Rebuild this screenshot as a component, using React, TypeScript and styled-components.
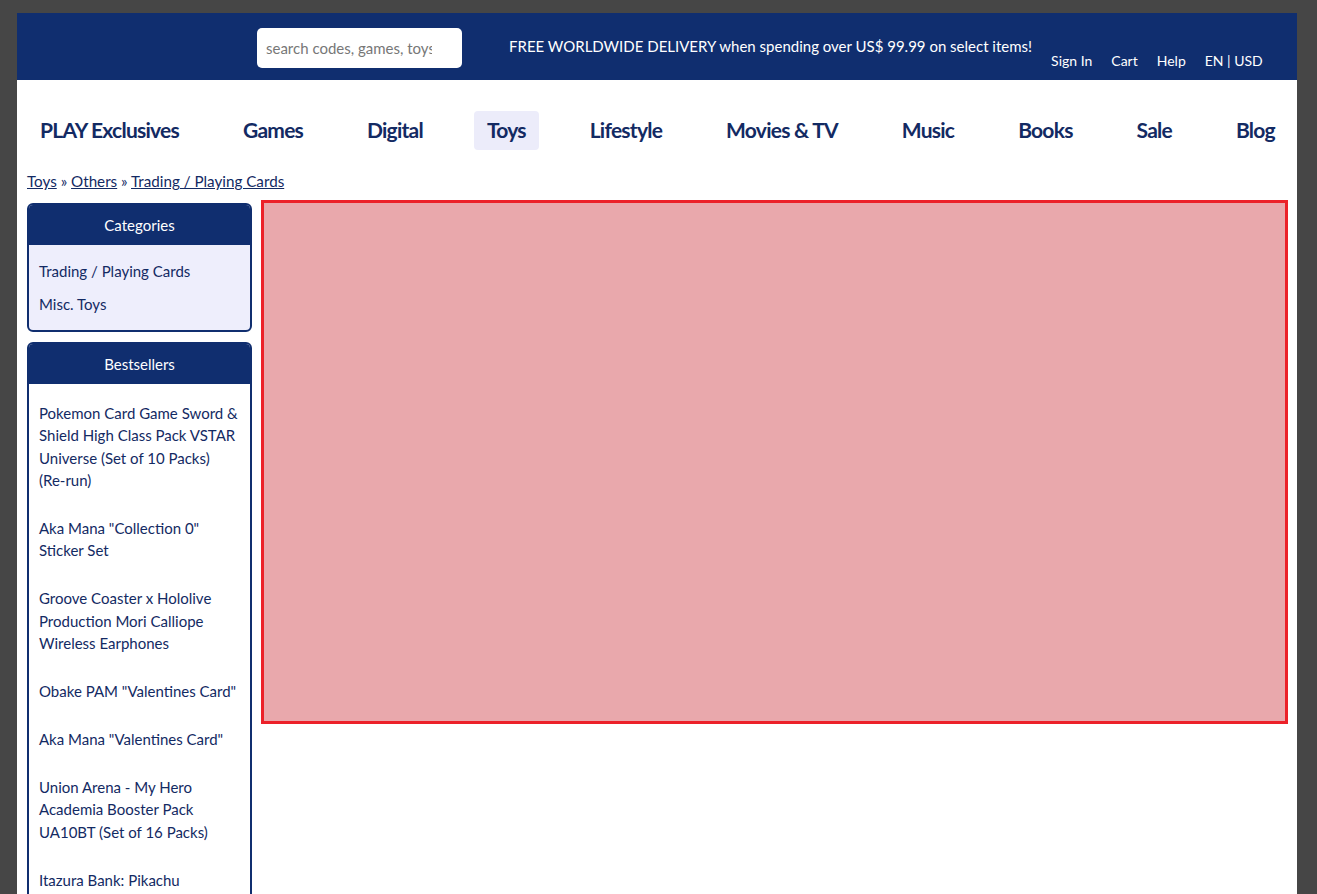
import React from "react";
import styled, { createGlobalStyle } from "styled-components";

const GlobalStyle = createGlobalStyle`
  html, body {
    margin: 0;
    padding: 0;
    background: #464646;
    font-family: Lato, "Open Sans", sans-serif;
  }
`;

const Page = styled.div`
  width: 1280px;
  margin: 13px 0 0 17px;
  background: #fff;
  min-height: 881px;
`;

const Header = styled.header`
  height: 67px;
  background: #102e6f;
  display: flex;
  align-items: flex-start;
  padding-left: 240px;
  box-sizing: border-box;
`;

const Search = styled.input`
  width: 205px;
  height: 40px;
  margin-top: 15px;
  border: none;
  border-radius: 5px;
  padding: 0 30px 0 9px;
  box-sizing: border-box;
  font-family: Lato, sans-serif;
  font-size: 15px;
  color: #333;
  outline: none;
  &::placeholder {
    color: #777;
  }
`;

const Promo = styled.div`
  margin: 24px 0 0 47px;
  color: #fff;
  font-size: 15px;
`;

const TopLinks = styled.nav`
  display: flex;
  gap: 19px;
  margin: 39px 0 0 19px;
`;

const TopLink = styled.a`
  color: #fff;
  font-size: 14px;
  text-decoration: none;
`;

const MainNav = styled.nav`
  display: flex;
  justify-content: space-between;
  padding: 31px 9px 0 10px;
`;

const NavItem = styled.a<{ $active?: boolean }>`
  display: block;
  padding: 0 13px;
  height: 39px;
  line-height: 38px;
  border-radius: 4px;
  background: ${(p) => (p.$active ? "#ececfa" : "transparent")};
  color: #132a63;
  font-size: 21px;
  font-weight: 700;
  letter-spacing: -0.75px;
  text-decoration: none;
`;

const Crumbs = styled.div`
  padding: 22px 10px 0;
  font-size: 15.2px;
  color: #132a63;
  a {
    color: #132a63;
    text-decoration: underline;
  }
`;

const Content = styled.div`
  display: flex;
  gap: 9px;
  padding: 10px 9px 0 10px;
  align-items: flex-start;
`;

const Sidebar = styled.aside`
  width: 225px;
  display: flex;
  flex-direction: column;
  gap: 10px;
  margin-top: 3px;
`;

const Box = styled.section<{ $tint?: boolean }>`
  border: 2px solid #102e6f;
  border-radius: 6px;
  overflow: hidden;
  background: ${(p) => (p.$tint ? "#eeeefc" : "#fff")};
`;

const BoxTitle = styled.div`
  background: #102e6f;
  color: #fff;
  height: 40px;
  line-height: 40px;
  text-align: center;
  font-size: 15px;
`;

const BoxList = styled.ul<{ $spaced?: boolean }>`
  list-style: none;
  margin: 0;
  padding: ${(p) => (p.$spaced ? "18px 12px 10px 10px" : "15px 10px 14px")};
  display: flex;
  flex-direction: column;
  gap: ${(p) => (p.$spaced ? "25.4px" : "10.5px")};
`;

const BoxLink = styled.li`
  color: #132a63;
  font-size: 15px;
  line-height: 22.5px;
`;

const Banner = styled.div`
  flex: 1;
  height: 524px;
  box-sizing: border-box;
  background: #e9a8ac;
  border: 3px solid #ec2129;
`;

const categories = ["Trading / Playing Cards", "Misc. Toys"];

const bestsellers = [
  "Pokemon Card Game Sword & Shield High Class Pack VSTAR Universe (Set of 10 Packs) (Re-run)",
  'Aka Mana "Collection 0" Sticker Set',
  "Groove Coaster x Hololive Production Mori Calliope Wireless Earphones",
  'Obake PAM "Valentines Card"',
  'Aka Mana "Valentines Card"',
  "Union Arena - My Hero Academia Booster Pack UA10BT (Set of 16 Packs)",
  "Itazura Bank: Pikachu",
  "Pokemon Card Game Scarlet & Violet Booster Pack",
];

const navItems = [
  "PLAY Exclusives",
  "Games",
  "Digital",
  "Toys",
  "Lifestyle",
  "Movies & TV",
  "Music",
  "Books",
  "Sale",
  "Blog",
];

export default function App() {
  return (
    <>
      <GlobalStyle />
      <Page>
        <Header>
          <Search placeholder="search codes, games, toys and more" />
          <Promo>FREE WORLDWIDE DELIVERY when spending over US$ 99.99 on select items!</Promo>
          <TopLinks>
            <TopLink>Sign In</TopLink>
            <TopLink>Cart</TopLink>
            <TopLink>Help</TopLink>
            <TopLink>EN | USD</TopLink>
          </TopLinks>
        </Header>
        <MainNav>
          {navItems.map((n) => (
            <NavItem key={n} $active={n === "Toys"}>
              {n}
            </NavItem>
          ))}
        </MainNav>
        <Crumbs>
          <a>Toys</a> » <a>Others</a> » <a>Trading / Playing Cards</a>
        </Crumbs>
        <Content>
          <Sidebar>
            <Box $tint>
              <BoxTitle>Categories</BoxTitle>
              <BoxList>
                {categories.map((c) => (
                  <BoxLink key={c}>{c}</BoxLink>
                ))}
              </BoxList>
            </Box>
            <Box>
              <BoxTitle>Bestsellers</BoxTitle>
              <BoxList $spaced>
                {bestsellers.map((b) => (
                  <BoxLink key={b}>{b}</BoxLink>
                ))}
              </BoxList>
            </Box>
          </Sidebar>
          <Banner />
        </Content>
      </Page>
    </>
  );
}
